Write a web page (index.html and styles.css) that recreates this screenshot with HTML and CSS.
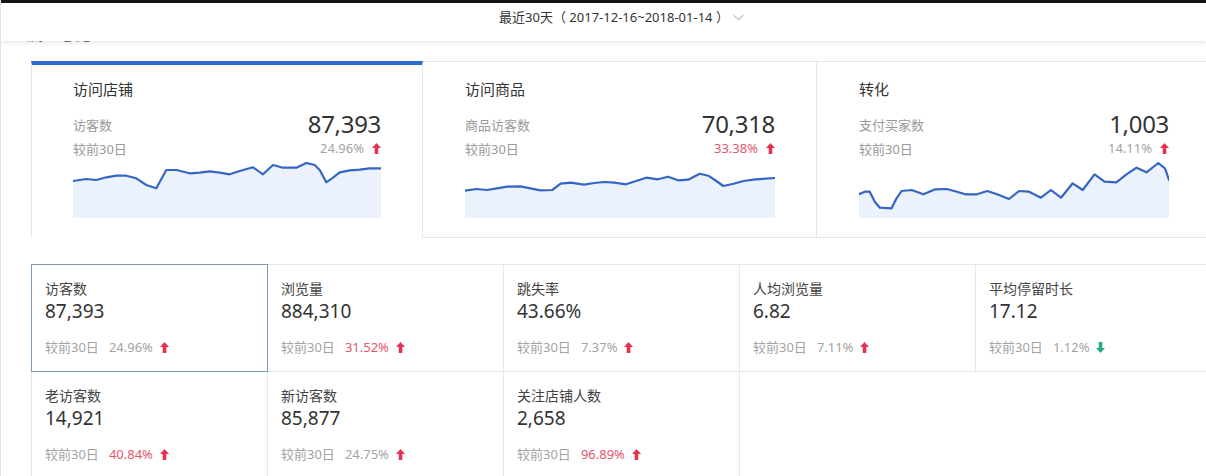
FILE: index.html
```html
<!DOCTYPE html>
<html lang="zh-CN">
<head>
<meta charset="utf-8">
<title>流量总览</title>
<link rel="stylesheet" href="styles.css">
</head>
<body>
<div class="topstrip"></div>
<header class="header">
  <div class="range">最近30天（ 2017-12-16~2018-01-14 ）<svg class="chev" width="11" height="7" viewBox="0 0 11 7"><path d="M0.5 0.8 L5.5 5.8 L10.5 0.8" fill="none" stroke="#bdbdbd" stroke-width="1.1"/></svg></div>
</header>
<main class="main">
  <div class="section-title">流量总览</div>

  <div class="cards">
    <section class="card card-active">
      <div class="card-title">访问店铺</div>
      <div class="card-row main-row"><span class="label">访客数</span><span class="big">87,393</span></div>
      <div class="card-row sub-row"><span class="label">较前30日</span><span class="pct gray">24.96%<svg class="arrow" viewBox="0 0 10 12"><path d="M5 0 L10 5.5 L7 5.5 L7 12 L3 12 L3 5.5 L0 5.5 Z" fill="#e5334f"/></svg></span></div>
      <svg class="chart" viewBox="0 0 308 56" preserveAspectRatio="none">
        <polygon class="area" points="0,19 13.3,17 23.3,18 33.3,15.3 43.3,13.7 53.3,13.7 63.3,16.3 73.3,23 83.3,26.3 93.3,8 103.3,8 116.7,11.3 126.7,10.7 136.7,9.3 146.7,10.7 156.7,12.3 166.7,9 180,5.3 190,12.3 200,3 210,5.7 223.3,5.7 233.3,1 241.7,3 246.7,8 253.3,20.3 260,15.7 266.7,10.3 276.7,8.3 286.7,7.7 296.7,6.3 308,6.3 308,56 0,56"/>
        <polyline class="line" points="0,19 13.3,17 23.3,18 33.3,15.3 43.3,13.7 53.3,13.7 63.3,16.3 73.3,23 83.3,26.3 93.3,8 103.3,8 116.7,11.3 126.7,10.7 136.7,9.3 146.7,10.7 156.7,12.3 166.7,9 180,5.3 190,12.3 200,3 210,5.7 223.3,5.7 233.3,1 241.7,3 246.7,8 253.3,20.3 260,15.7 266.7,10.3 276.7,8.3 286.7,7.7 296.7,6.3 308,6.3"/>
      </svg>
    </section>
    <section class="card">
      <div class="card-title">访问商品</div>
      <div class="card-row main-row"><span class="label">商品访客数</span><span class="big">70,318</span></div>
      <div class="card-row sub-row"><span class="label">较前30日</span><span class="pct red">33.38%<svg class="arrow" viewBox="0 0 10 12"><path d="M5 0 L10 5.5 L7 5.5 L7 12 L3 12 L3 5.5 L0 5.5 Z" fill="#e5334f"/></svg></span></div>
      <svg class="chart" viewBox="0 0 308 56" preserveAspectRatio="none">
        <polygon class="area" points="0,28.7 11.7,27 21.7,28 31.7,26.3 41.7,24.7 55,24.3 65,26.3 75,28.3 86.7,28 95,21.7 105,20.7 118.3,22.7 128.3,21 138.3,20 148.3,20.7 160,22.3 170,19 180,15.7 191.7,17.3 201.7,14.7 211.7,18.3 221.7,17.7 233.3,11.7 241.7,13.7 248.3,18 256.7,24 266.7,21.7 276.7,19 288.3,17.3 298.3,16.7 308,16 308,56 0,56"/>
        <polyline class="line" points="0,28.7 11.7,27 21.7,28 31.7,26.3 41.7,24.7 55,24.3 65,26.3 75,28.3 86.7,28 95,21.7 105,20.7 118.3,22.7 128.3,21 138.3,20 148.3,20.7 160,22.3 170,19 180,15.7 191.7,17.3 201.7,14.7 211.7,18.3 221.7,17.7 233.3,11.7 241.7,13.7 248.3,18 256.7,24 266.7,21.7 276.7,19 288.3,17.3 298.3,16.7 308,16"/>
      </svg>
    </section>
    <section class="card">
      <div class="card-title">转化</div>
      <div class="card-row main-row"><span class="label">支付买家数</span><span class="big">1,003</span></div>
      <div class="card-row sub-row"><span class="label">较前30日</span><span class="pct gray">14.11%<svg class="arrow" viewBox="0 0 10 12"><path d="M5 0 L10 5.5 L7 5.5 L7 12 L3 12 L3 5.5 L0 5.5 Z" fill="#e5334f"/></svg></span></div>
      <svg class="chart" viewBox="0 0 308 56" preserveAspectRatio="none">
        <polygon class="area" points="0,32.3 5.7,29.7 10.7,29.7 15.7,39.7 20.7,45.7 32.3,46.3 37.3,36.3 42.3,29 52.3,28 64,32.3 75.7,27.3 87.3,27 97.3,29.7 105.7,32.3 117.3,32.3 127.3,29 137.3,32.3 149,37 159,29 169,29.7 180.7,35.7 190.7,28 200.7,35.7 212.3,21.3 222.3,28 234,12.3 244,19.7 255.7,20.3 265.7,12.3 275.7,5.7 285.7,10.3 297.3,1 304,6.3 308,18 308,56 0,56"/>
        <polyline class="line" points="0,32.3 5.7,29.7 10.7,29.7 15.7,39.7 20.7,45.7 32.3,46.3 37.3,36.3 42.3,29 52.3,28 64,32.3 75.7,27.3 87.3,27 97.3,29.7 105.7,32.3 117.3,32.3 127.3,29 137.3,32.3 149,37 159,29 169,29.7 180.7,35.7 190.7,28 200.7,35.7 212.3,21.3 222.3,28 234,12.3 244,19.7 255.7,20.3 265.7,12.3 275.7,5.7 285.7,10.3 297.3,1 304,6.3 308,18"/>
      </svg>
    </section>
  </div>

  <div class="grid">
    <div class="cell selected">
      <div class="cell-title">访客数</div>
      <div class="cell-value">87,393</div>
      <div class="cell-cmp">较前30日<span class="pct gray">24.96%<svg class="arrow" viewBox="0 0 10 12"><path d="M5 0 L10 5.5 L7 5.5 L7 12 L3 12 L3 5.5 L0 5.5 Z" fill="#e5334f"/></svg></span></div>
    </div>
    <div class="cell">
      <div class="cell-title">浏览量</div>
      <div class="cell-value">884,310</div>
      <div class="cell-cmp">较前30日<span class="pct red">31.52%<svg class="arrow" viewBox="0 0 10 12"><path d="M5 0 L10 5.5 L7 5.5 L7 12 L3 12 L3 5.5 L0 5.5 Z" fill="#e5334f"/></svg></span></div>
    </div>
    <div class="cell">
      <div class="cell-title">跳失率</div>
      <div class="cell-value">43.66%</div>
      <div class="cell-cmp">较前30日<span class="pct gray">7.37%<svg class="arrow" viewBox="0 0 10 12"><path d="M5 0 L10 5.5 L7 5.5 L7 12 L3 12 L3 5.5 L0 5.5 Z" fill="#e5334f"/></svg></span></div>
    </div>
    <div class="cell">
      <div class="cell-title">人均浏览量</div>
      <div class="cell-value">6.82</div>
      <div class="cell-cmp">较前30日<span class="pct gray">7.11%<svg class="arrow" viewBox="0 0 10 12"><path d="M5 0 L10 5.5 L7 5.5 L7 12 L3 12 L3 5.5 L0 5.5 Z" fill="#e5334f"/></svg></span></div>
    </div>
    <div class="cell">
      <div class="cell-title">平均停留时长</div>
      <div class="cell-value">17.12</div>
      <div class="cell-cmp">较前30日<span class="pct gray">1.12%<svg class="arrow" viewBox="0 0 10 12"><path d="M5 12 L10 6.5 L7 6.5 L7 0 L3 0 L3 6.5 L0 6.5 Z" fill="#1fae84"/></svg></span></div>
    </div>
    <div class="cell">
      <div class="cell-title">老访客数</div>
      <div class="cell-value">14,921</div>
      <div class="cell-cmp">较前30日<span class="pct red">40.84%<svg class="arrow" viewBox="0 0 10 12"><path d="M5 0 L10 5.5 L7 5.5 L7 12 L3 12 L3 5.5 L0 5.5 Z" fill="#e5334f"/></svg></span></div>
    </div>
    <div class="cell">
      <div class="cell-title">新访客数</div>
      <div class="cell-value">85,877</div>
      <div class="cell-cmp">较前30日<span class="pct gray">24.75%<svg class="arrow" viewBox="0 0 10 12"><path d="M5 0 L10 5.5 L7 5.5 L7 12 L3 12 L3 5.5 L0 5.5 Z" fill="#e5334f"/></svg></span></div>
    </div>
    <div class="cell">
      <div class="cell-title">关注店铺人数</div>
      <div class="cell-value">2,658</div>
      <div class="cell-cmp">较前30日<span class="pct red">96.89%<svg class="arrow" viewBox="0 0 10 12"><path d="M5 0 L10 5.5 L7 5.5 L7 12 L3 12 L3 5.5 L0 5.5 Z" fill="#e5334f"/></svg></span></div>
    </div>
  </div>
</main>
</body>
</html>
```
FILE: styles.css
```css
html, body {
  margin: 0;
  padding: 0;
}
body {
  width: 1206px;
  height: 476px;
  overflow: hidden;
  background: #fff;
  font-family: "Noto Sans", "Noto Sans CJK SC", sans-serif;
  color: #333;
  border-left: 1px solid #e2e2e2;
  box-sizing: border-box;
}
.topstrip {
  height: 3px;
  background: #151515;
}
.header {
  position: relative;
  z-index: 2;
  height: 38px;
  background: #fff;
  box-shadow: 0 2px 4px rgba(0, 0, 0, 0.09);
  display: flex;
  align-items: flex-start;
  justify-content: center;
  padding-left: 36px;
  padding-top: 5px;
  box-sizing: border-box;
}
.range {
  font-size: 13px;
  line-height: 18px;
  color: #333;
  display: flex;
  align-items: center;
}
.chev {
  margin-left: 4px;
  margin-top: 1px;
}
.main {
  padding-left: 30px;
}
.section-title {
  margin-top: -17px;
  margin-left: -4px;
  height: 20px;
  line-height: 20px;
  font-size: 16px;
  color: #777;
}
.cards {
  margin-top: 17px;
  display: grid;
  grid-template-columns: 392px 394px 394px;
  width: 1180px;
}
.card {
  border-top: 1px solid #e8e8e8;
  border-bottom: 1px solid #e8e8e8;
  border-right: 1px solid #e8e8e8;
  padding: 16px 41px 19px 42px;
  display: flex;
  flex-direction: column;
}
.card-active {
  border-top: 4px solid #2a6bd0;
  border-left: 1px solid #e8e8e8;
  border-bottom: none;
  padding: 13px 41px 20px 41px;
}
.card-title {
  font-size: 15px;
  line-height: 22px;
  color: #333;
}
.card-row {
  display: flex;
  justify-content: space-between;
  align-items: center;
}
.main-row {
  margin-top: 9px;
  height: 30px;
}
.sub-row {
  height: 18px;
}
.label {
  font-size: 13px;
  color: #999;
}
.big {
  font-size: 24px;
  letter-spacing: -0.3px;
  color: #333;
  line-height: 30px;
}
.pct {
  font-size: 13px;
  display: inline-flex;
  align-items: center;
}
.pct.gray {
  color: #a3a3a3;
}
.pct.red {
  color: #e3566c;
}
.arrow {
  width: 9px;
  height: 11px;
  margin-left: 8px;
}
.chart {
  display: block;
  margin-top: 5px;
  width: 100%;
  height: 56px;
}
.chart .area {
  fill: #ecf2fb;
}
.chart .line {
  fill: none;
  stroke: #3566c4;
  stroke-width: 2.2;
  stroke-linejoin: round;
  stroke-linecap: round;
  vector-effect: non-scaling-stroke;
}
.grid {
  margin-top: 26px;
  display: grid;
  grid-template-columns: repeat(5, 236px);
  grid-auto-rows: 107px;
  width: 1180px;
}
.cell {
  border: 1px solid #e8e8e8;
  margin: 0 -1px -1px 0;
  padding: 15px 13px 0;
  box-sizing: border-box;
}
.cell.selected {
  position: relative;
  z-index: 1;
  border-color: #7b98b8;
}
.cell-title {
  font-size: 14px;
  line-height: 18px;
  color: #444;
}
.cell-value {
  font-size: 19px;
  line-height: 26px;
  color: #333;
}
.cell-cmp {
  margin-top: 14px;
  font-size: 13px;
  line-height: 18px;
  color: #a3a3a3;
  display: flex;
  align-items: center;
}
.cell-cmp .pct {
  margin-left: 10px;
}
.cell-cmp .arrow {
  margin-left: 7px;
}
```
